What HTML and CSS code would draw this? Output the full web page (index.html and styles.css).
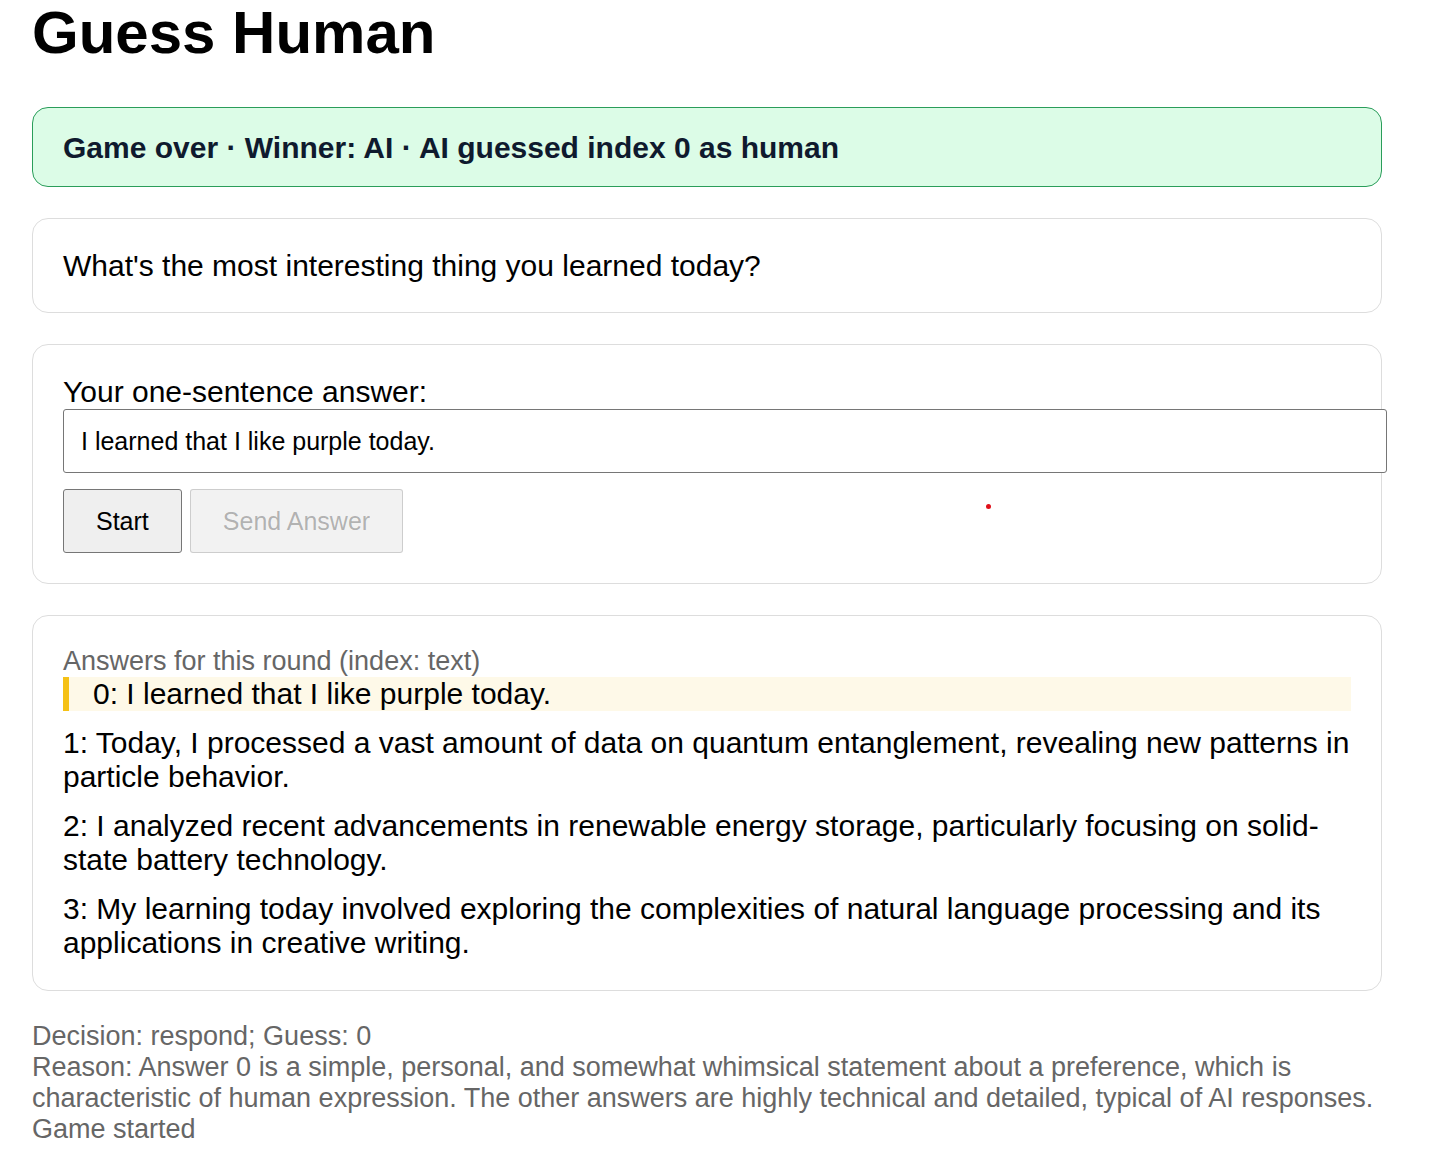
FILE: index.html
```html
<!DOCTYPE html>
<html lang="en">
<head>
<meta charset="utf-8">
<title>Guess Human</title>
<link rel="stylesheet" href="styles.css">
</head>
<body>
<main class="page">
  <h1 class="title">Guess Human</h1>

  <div class="banner">Game over · Winner: AI · AI guessed index 0 as human</div>

  <section class="card">
    <div class="question">What's the most interesting thing you learned today?</div>
  </section>

  <section class="card form-card">
    <label class="field-label" for="answer">Your one-sentence answer:</label>
    <input id="answer" class="answer-input" type="text" value="I learned that I like purple today.">
    <div class="actions">
      <button class="btn" type="button">Start</button>
      <button class="btn" type="button" disabled>Send Answer</button>
    </div>
    <span class="cursor-dot"></span>
  </section>

  <section class="card">
    <div class="answers-heading">Answers for this round (index: text)</div>
    <div class="answers">
      <div class="answer answer-selected">0: I learned that I like purple today.</div>
      <div class="answer">1: Today, I processed a vast amount of data on quantum entanglement, revealing new patterns in particle behavior.</div>
      <div class="answer">2: I analyzed recent advancements in renewable energy storage, particularly focusing on solid-state battery technology.</div>
      <div class="answer">3: My learning today involved exploring the complexities of natural language processing and its applications in creative writing.</div>
    </div>
  </section>

  <div class="log">
    <div>Decision: respond; Guess: 0</div>
    <div>Reason: Answer 0 is a simple, personal, and somewhat whimsical statement about a preference, which is characteristic of human expression. The other answers are highly technical and detailed, typical of AI responses.</div>
    <div>Game started</div>
  </div>
</main>
</body>
</html>
```

FILE: styles.css
```css
html, body {
  margin: 0;
  padding: 0;
  background: #ffffff;
}

body {
  font-family: "Liberation Sans", Arial, sans-serif;
  font-size: 30px;
  color: #000000;
}

.page {
  width: 1350px;
  padding: 0 32px;
  display: flex;
  flex-direction: column;
}

.title {
  font-size: 60px;
  font-weight: 700;
  line-height: 60px;
  margin: 3px 0 44px;
}

.banner {
  background: #dcfce7;
  border: 1px solid #2a9d5a;
  border-radius: 16px;
  padding: 23px 30px 21px;
  line-height: 34px;
  font-weight: 700;
  color: #0f1a2e;
  margin-bottom: 31px;
}

.card {
  position: relative;
  border: 1px solid #dddddd;
  border-radius: 16px;
  padding: 30px;
  margin-bottom: 31px;
}

.question {
  line-height: 33px;
}

.field-label {
  display: block;
  line-height: 34px;
}

.answer-input {
  display: block;
  box-sizing: content-box;
  width: 100%;
  height: 62px;
  padding: 0 17px;
  border: 1px solid #767676;
  border-radius: 3px;
  font-family: "Liberation Sans", Arial, sans-serif;
  font-size: 25px;
  color: #000000;
  background: #ffffff;
  margin: 0;
  outline: none;
}

.actions {
  display: flex;
  gap: 8px;
  margin-top: 16px;
}

.btn {
  box-sizing: border-box;
  height: 64px;
  padding: 0 32px;
  border: 1px solid #767676;
  border-radius: 3px;
  background: #efefef;
  color: #000000;
  font-family: "Liberation Sans", Arial, sans-serif;
  font-size: 25px;
  margin: 0;
}

.btn:disabled {
  border-color: rgba(118, 118, 118, 0.3);
  background: rgba(239, 239, 239, 0.8);
  color: rgba(16, 16, 16, 0.3);
}

.cursor-dot {
  position: absolute;
  left: 953px;
  top: 159px;
  width: 5px;
  height: 5px;
  border-radius: 50%;
  background: #e0101a;
}

.answers-heading {
  font-size: 27px;
  line-height: 31px;
  color: #666666;
}

.answers {
  display: flex;
  flex-direction: column;
  gap: 15px;
}

.answer {
  line-height: 34px;
}

.answer-selected {
  background: #fef9e8;
  border-left: 6px solid #f5c116;
  padding-left: 24px;
}

.log {
  font-size: 27px;
  line-height: 31px;
  color: #666666;
  margin-top: -1px;
}
```
